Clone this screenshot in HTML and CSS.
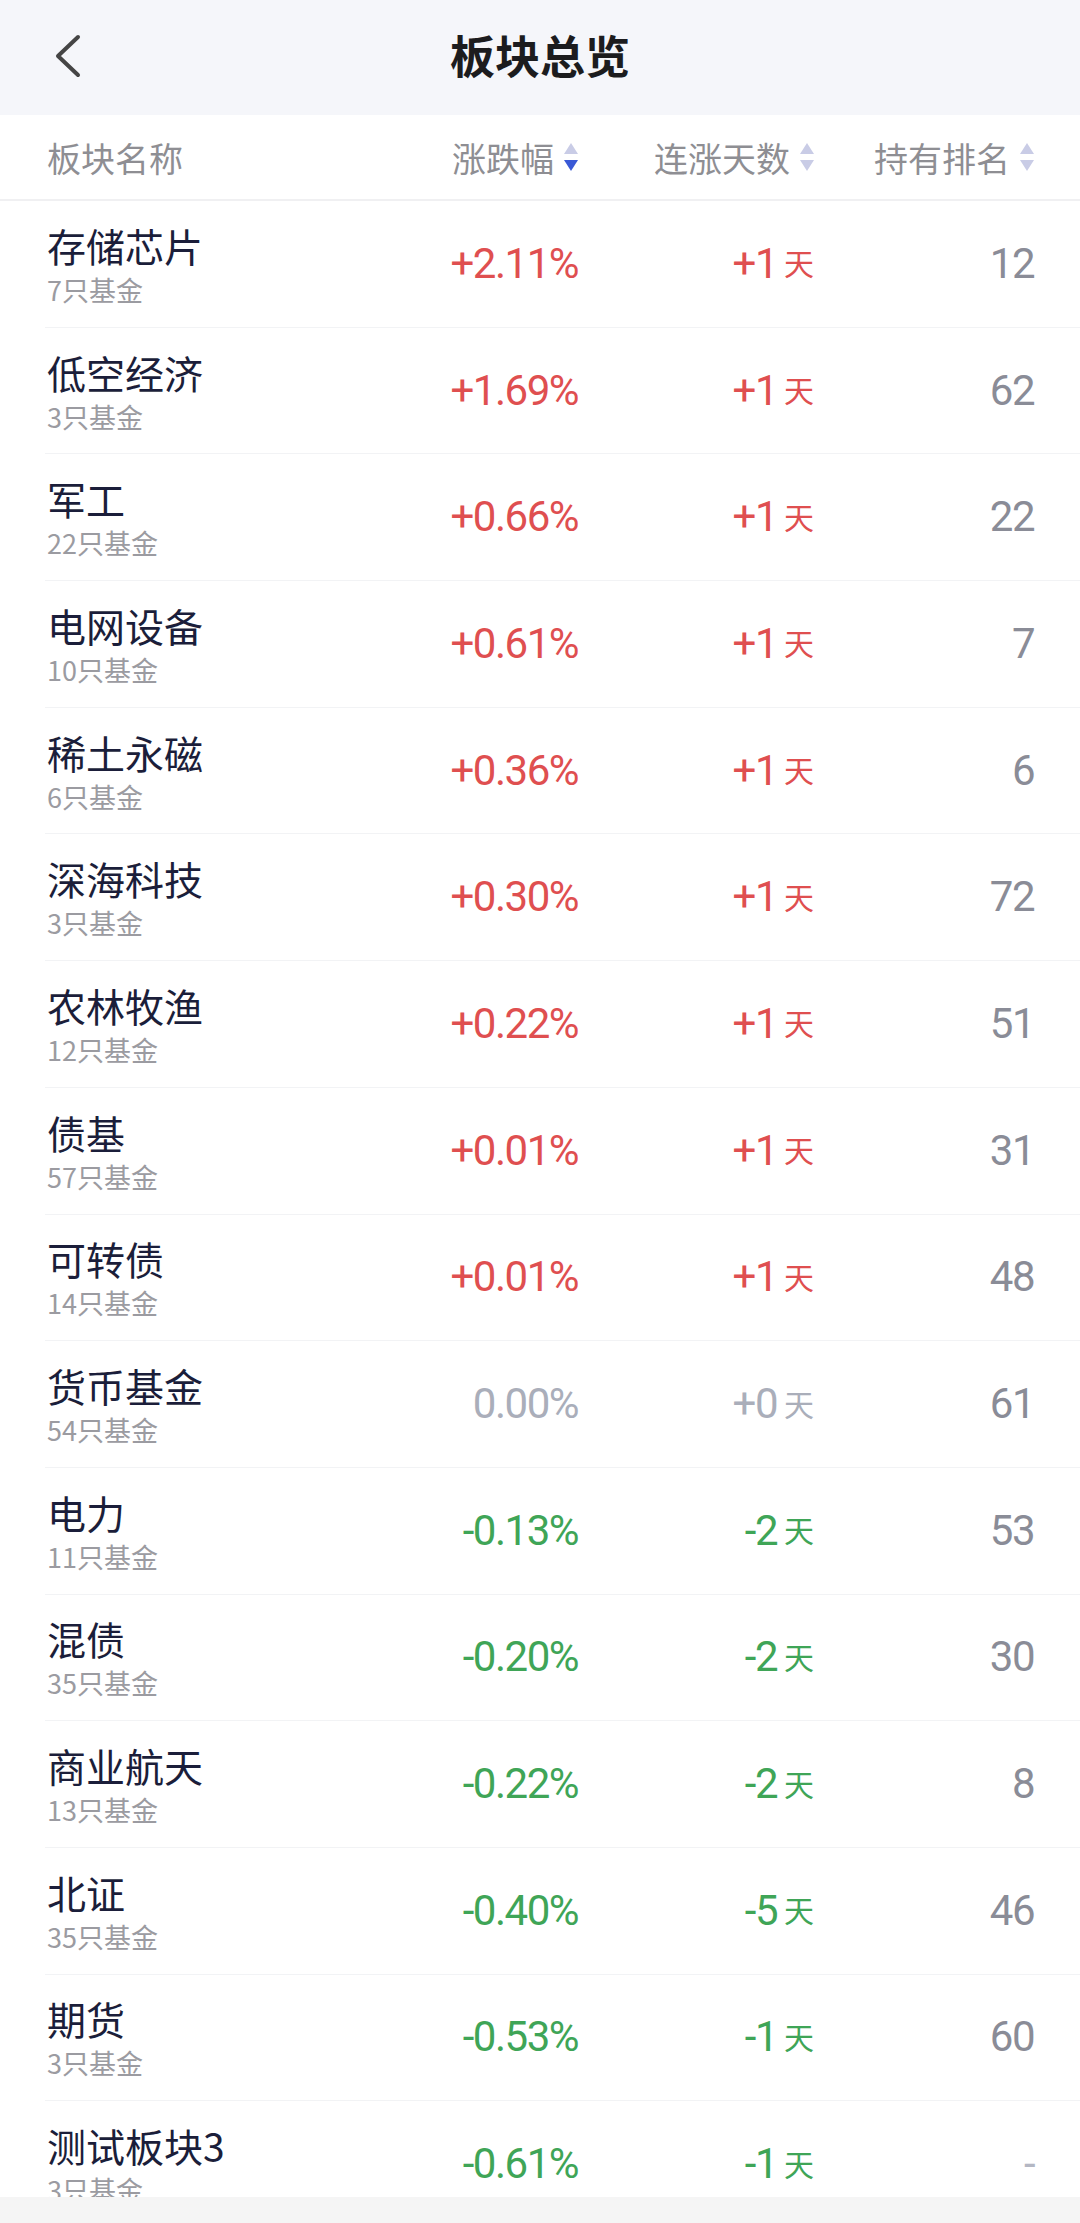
FILE: index.html
```html
<!DOCTYPE html>
<html lang="zh-CN">
<head>
<meta charset="utf-8">
<title>板块总览</title>
<link rel="stylesheet" href="styles.css">
</head>
<body>
<div class="page">
  <header class="topbar">
    <div class="back">
      <svg width="30" height="46" viewBox="0 0 30 46"><polyline points="24,4 4,23 24,42" fill="none" stroke="#454545" stroke-width="4" stroke-linecap="round" stroke-linejoin="round"/></svg>
    </div>
    <div class="title">板块总览</div>
    <div></div>
  </header>
  <div class="colhead">
    <div class="ch ch-name">板块名称</div>
    <div class="ch">涨跌幅<span class="sort"><i class="up"></i><i class="down active"></i></span></div>
    <div class="ch">连涨天数<span class="sort"><i class="up"></i><i class="down"></i></span></div>
    <div class="ch">持有排名<span class="sort"><i class="up"></i><i class="down"></i></span></div>
  </div>
  <div class="list">
    <div class="row"><div class="nm"><div class="n">存储芯片</div><div class="s">7只基金</div></div><div class="v red">+2.11%</div><div class="v red">+1<span class="d">天</span></div><div class="v rank">12</div></div>
    <div class="row"><div class="nm"><div class="n">低空经济</div><div class="s">3只基金</div></div><div class="v red">+1.69%</div><div class="v red">+1<span class="d">天</span></div><div class="v rank">62</div></div>
    <div class="row"><div class="nm"><div class="n">军工</div><div class="s">22只基金</div></div><div class="v red">+0.66%</div><div class="v red">+1<span class="d">天</span></div><div class="v rank">22</div></div>
    <div class="row"><div class="nm"><div class="n">电网设备</div><div class="s">10只基金</div></div><div class="v red">+0.61%</div><div class="v red">+1<span class="d">天</span></div><div class="v rank">7</div></div>
    <div class="row"><div class="nm"><div class="n">稀土永磁</div><div class="s">6只基金</div></div><div class="v red">+0.36%</div><div class="v red">+1<span class="d">天</span></div><div class="v rank">6</div></div>
    <div class="row"><div class="nm"><div class="n">深海科技</div><div class="s">3只基金</div></div><div class="v red">+0.30%</div><div class="v red">+1<span class="d">天</span></div><div class="v rank">72</div></div>
    <div class="row"><div class="nm"><div class="n">农林牧渔</div><div class="s">12只基金</div></div><div class="v red">+0.22%</div><div class="v red">+1<span class="d">天</span></div><div class="v rank">51</div></div>
    <div class="row"><div class="nm"><div class="n">债基</div><div class="s">57只基金</div></div><div class="v red">+0.01%</div><div class="v red">+1<span class="d">天</span></div><div class="v rank">31</div></div>
    <div class="row"><div class="nm"><div class="n">可转债</div><div class="s">14只基金</div></div><div class="v red">+0.01%</div><div class="v red">+1<span class="d">天</span></div><div class="v rank">48</div></div>
    <div class="row"><div class="nm"><div class="n">货币基金</div><div class="s">54只基金</div></div><div class="v flat">0.00%</div><div class="v flat">+0<span class="d">天</span></div><div class="v rank">61</div></div>
    <div class="row"><div class="nm"><div class="n">电力</div><div class="s">11只基金</div></div><div class="v green">-0.13%</div><div class="v green">-2<span class="d">天</span></div><div class="v rank">53</div></div>
    <div class="row"><div class="nm"><div class="n">混债</div><div class="s">35只基金</div></div><div class="v green">-0.20%</div><div class="v green">-2<span class="d">天</span></div><div class="v rank">30</div></div>
    <div class="row"><div class="nm"><div class="n">商业航天</div><div class="s">13只基金</div></div><div class="v green">-0.22%</div><div class="v green">-2<span class="d">天</span></div><div class="v rank">8</div></div>
    <div class="row"><div class="nm"><div class="n">北证</div><div class="s">35只基金</div></div><div class="v green">-0.40%</div><div class="v green">-5<span class="d">天</span></div><div class="v rank">46</div></div>
    <div class="row"><div class="nm"><div class="n">期货</div><div class="s">3只基金</div></div><div class="v green">-0.53%</div><div class="v green">-1<span class="d">天</span></div><div class="v rank">60</div></div>
    <div class="row"><div class="nm"><div class="n">测试板块3</div><div class="s">3只基金</div></div><div class="v green">-0.61%</div><div class="v green">-1<span class="d">天</span></div><div class="v rank dash">-</div></div>
  </div>
  <div class="homebar"></div>
</div>
</body>
</html>
```

FILE: styles.css
```css
* { box-sizing: border-box; }
html, body { margin: 0; padding: 0; }
body {
  background: #ffffff;
  font-family: "Noto Sans CJK SC", "Noto Sans", sans-serif;
}
.page {
  height: 2223px;
  display: flex;
  flex-direction: column;
  overflow: hidden;
}
.topbar {
  flex: 0 0 115px;
  background: #f5f6fa;
  display: grid;
  grid-template-columns: 1fr auto 1fr;
  align-items: center;
}
.back {
  padding-left: 54px;
  display: flex;
  align-items: center;
  padding-bottom: 4px;
}
.title {
  font-size: 45px;
  font-weight: 700;
  color: #1c1c1e;
  padding-bottom: 6px;
}
.colhead {
  flex: 0 0 86px;
  display: grid;
  grid-template-columns: 1fr 200px 236px 220px;
  align-items: center;
  padding: 0 46px 0 47px;
  border-bottom: 2px solid #f0f0f2;
}
.ch {
  font-size: 34px;
  color: #8e8e93;
  display: flex;
  justify-content: flex-end;
  align-items: center;
}
.ch-name { justify-content: flex-start; }
.sort {
  display: flex;
  flex-direction: column;
  gap: 6px;
  margin-left: 10px;
}
.sort i {
  display: block;
  width: 0;
  height: 0;
  border-left: 7px solid transparent;
  border-right: 7px solid transparent;
}
.sort .up { border-bottom: 11px solid #c9cce6; }
.sort .down { border-top: 11px solid #c9cce6; }
.sort .down.active { border-top-color: #3a59d6; }
.list {
  flex: 1 1 auto;
  overflow: hidden;
}
.row {
  height: 126.7px;
  margin-left: 45px;
  padding: 0 46px 0 2px;
  border-bottom: 1px solid #f2f3f5;
  display: grid;
  grid-template-columns: 1fr 200px 236px 220px;
  align-items: center;
}
.nm { display: flex; flex-direction: column; padding-top: 2px; }
.n {
  font-size: 39px;
  line-height: 50px;
  color: #1b1e3a;
}
.s {
  font-size: 27px;
  line-height: 40px;
  color: #9b9ba1;
}
.v {
  font-family: Roboto, "Noto Sans CJK SC", sans-serif;
  font-size: 42px;
  font-weight: 400;
  letter-spacing: -1.5px;
  line-height: 50px;
  text-align: right;
  display: flex;
  justify-content: flex-end;
  align-items: center;
}
.v .d {
  font-family: "Noto Sans CJK SC", sans-serif;
  font-size: 30px;
  letter-spacing: 0;
  line-height: 40px;
  margin-left: 7px;
  margin-top: -3px;
}
.red { color: #df4f50; }
.green { color: #3fa557; }
.flat { color: #aaaeba; }
.rank { color: #8a8c97; }
.dash { color: #b4b7c3; }
.homebar {
  flex: 0 0 26px;
  background: #f5f5f5;
}
```
